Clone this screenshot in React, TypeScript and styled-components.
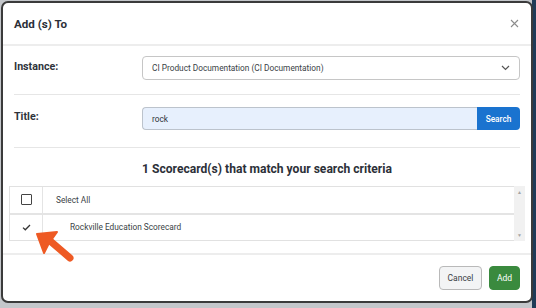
import React from 'react'
import styled, { createGlobalStyle } from 'styled-components'

const GlobalStyle = createGlobalStyle`
  html, body {
    margin: 0;
    padding: 0;
    width: 536px;
    height: 308px;
    overflow: hidden;
    background: #c4c7cb;
    font-family: Roboto, "Liberation Sans", sans-serif;
  }
`

const Page = styled.div`
  position: relative;
  width: 536px;
  height: 308px;
  padding: 1px 0 0 1px;
  box-sizing: border-box;
  background: linear-gradient(to right, #c4c7cb 532px, #1f3b57 532px);
`

const Modal = styled.div`
  position: relative;
  width: 532px;
  height: 302px;
  box-sizing: border-box;
  border: 2px solid #3b3b3b;
  border-radius: 7px;
  background: #fff;
  display: flex;
  flex-direction: column;
  color: #2f343c;
`

const Header = styled.div`
  height: 41px;
  display: flex;
  align-items: center;
  justify-content: space-between;
  padding: 0 12px 0 11px;
  border-bottom: 2px solid #ededed;
`

const Title = styled.div`
  font-size: 11.6px;
  font-weight: 700;
  color: #2c3038;
`

const FieldRow = styled.div<{ $pt: number; $pb: number }>`
  display: grid;
  grid-template-columns: 128px 1fr;
  align-items: center;
  margin: 0 11px;
  padding: ${p => p.$pt}px 0 ${p => p.$pb}px;
  border-bottom: 1px solid #e6e6e6;
`

const Label = styled.div<{ $top?: boolean }>`
  font-size: 10.7px;
  font-weight: 700;
  color: #2f343c;
  align-self: ${p => (p.$top ? 'start' : 'center')};
  padding-top: ${p => (p.$top ? 3 : 0)}px;
  margin-top: ${p => (p.$top ? 0 : -3)}px;
`

const Select = styled.div`
  height: 24px;
  box-sizing: border-box;
  border: 1px solid #c6c6c6;
  border-radius: 4px;
  display: flex;
  align-items: center;
  justify-content: space-between;
  padding: 0 9px 0 9px;
  font-size: 8.3px;
  color: #3a3f46;
`

const SearchGroup = styled.div`
  display: flex;
  height: 23px;
`

const Input = styled.div`
  flex: 1;
  box-sizing: border-box;
  background: #e7f0fd;
  border: 1px solid #bcc3cc;
  border-right: none;
  border-radius: 4px 0 0 4px;
  display: flex;
  align-items: center;
  padding: 0 9px;
  font-size: 8.3px;
  color: #2f343c;
`

const SearchButton = styled.div`
  width: 43px;
  background: #1a73cf;
  color: #fff;
  border-radius: 0 4px 4px 0;
  display: flex;
  align-items: center;
  justify-content: center;
  font-size: 8.3px;
  font-weight: 500;
`

const Heading = styled.div`
  text-align: center;
  font-size: 12.1px;
  font-weight: 700;
  line-height: 17px;
  padding: 13px 0 8px;
  color: #2c3038;
`

const TableWrap = styled.div`
  display: flex;
  margin: 0 6px;
  height: 55px;
`

const Table = styled.div`
  flex: 1;
  border: 1px solid #e1e1e1;
  border-right: none;
  display: flex;
  flex-direction: column;
`

const Row = styled.div<{ $last?: boolean }>`
  display: grid;
  grid-template-columns: 33px 1fr;
  flex: 1;
  border-bottom: ${p => (p.$last ? 'none' : '2px solid #e4e4e4')};
`

const CheckCell = styled.div`
  display: flex;
  align-items: center;
  justify-content: center;
  border-right: 1px solid #e4e4e4;
`

const Box = styled.div`
  width: 9px;
  height: 9px;
  border: 1.5px solid #444;
  border-radius: 1px;
`

const NameCell = styled.div<{ $indent: number }>`
  display: flex;
  align-items: center;
  padding-left: ${p => p.$indent}px;
  font-size: 8.3px;
  color: #3a3f46;
`

const Scrollbar = styled.div`
  width: 11px;
  background: #f1f1f1;
  display: flex;
  flex-direction: column;
  justify-content: space-between;
  align-items: center;
  padding: 3px 0;
  box-sizing: border-box;
  font-size: 5px;
  color: #a5a5a5;
`

const Footer = styled.div`
  margin-top: auto;
  height: 46px;
  border-top: 2px solid #ededed;
  display: flex;
  align-items: center;
  justify-content: flex-end;
  gap: 7px;
  padding: 0 11px 0 0;
`

const Button = styled.div<{ $primary?: boolean; $w: number }>`
  width: ${p => p.$w}px;
  height: 24px;
  box-sizing: border-box;
  border-radius: 4px;
  display: flex;
  align-items: center;
  justify-content: center;
  font-size: 8.5px;
  background: ${p => (p.$primary ? '#3a8a3e' : '#f3f4f5')};
  color: ${p => (p.$primary ? '#fff' : '#3a3f46')};
  border: 1px solid ${p => (p.$primary ? '#3a8a3e' : '#b9b9b9')};
`

const Pointer = styled.svg`
  position: absolute;
  left: 30px;
  top: 224px;
  pointer-events: none;
`

const App = () => {
  return (
    <Page>
      <GlobalStyle />
      <Modal>
        <Header>
          <Title>Add (s) To</Title>
          <svg width="9" height="9" viewBox="0 0 9 9">
            <path d="M1 1l7 7M8 1l-7 7" stroke="#8c8c8c" strokeWidth="1.1" />
          </svg>
        </Header>

        <FieldRow $pt={10} $pb={14}>
          <Label>Instance:</Label>
          <Select>
            <span>CI Product Documentation (CI Documentation)</span>
            <svg width="9" height="6" viewBox="0 0 9 6">
              <path d="M1 1l3.5 3.5L8 1" fill="none" stroke="#555" strokeWidth="1.2" />
            </svg>
          </Select>
        </FieldRow>

        <FieldRow $pt={12} $pb={17}>
          <Label $top>Title:</Label>
          <SearchGroup>
            <Input>rock</Input>
            <SearchButton>Search</SearchButton>
          </SearchGroup>
        </FieldRow>

        <Heading>1 Scorecard(s) that match your search criteria</Heading>

        <TableWrap>
          <Table>
            <Row>
              <CheckCell>
                <Box />
              </CheckCell>
              <NameCell $indent={13}>Select All</NameCell>
            </Row>
            <Row $last>
              <CheckCell>
                <svg width="9" height="7" viewBox="0 0 9 7">
                  <path d="M1 3.6l2.3 2.2L8 1" fill="none" stroke="#333" strokeWidth="1.3" />
                </svg>
              </CheckCell>
              <NameCell $indent={27}>Rockville Education Scorecard</NameCell>
            </Row>
          </Table>
          <Scrollbar>
            <span>▲</span>
            <span>▼</span>
          </Scrollbar>
        </TableWrap>

        <Footer>
          <Button $w={43}>Cancel</Button>
          <Button $primary $w={31}>Add</Button>
        </Footer>

        <Pointer width="46" height="42" viewBox="0 0 46 42">
          <path d="M4 7 L24 5 L19 12 L15 18 L11 26 Z" fill="#ee5a24" stroke="#ee5a24" strokeWidth="2" strokeLinejoin="round" />
          <path d="M16 13 L37 31" stroke="#ee5a24" strokeWidth="7" strokeLinecap="round" />
        </Pointer>
      </Modal>
    </Page>
  )
}

export default App
